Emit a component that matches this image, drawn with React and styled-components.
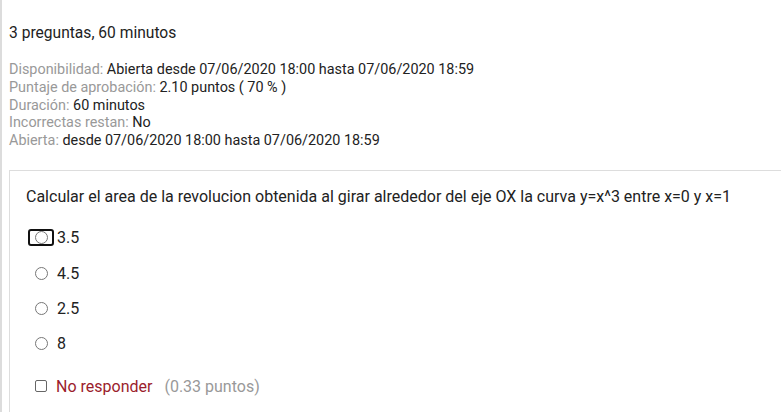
import React from "react";
import styled, { createGlobalStyle } from "styled-components";

const Global = createGlobalStyle`
  html, body { margin: 0; padding: 0; background: #fff; }
  body { font-family: Roboto, "Liberation Sans", Arial, sans-serif; color: #222; }
`;

const info = [
  ["Disponibilidad", "Abierta desde 07/06/2020 18:00 hasta 07/06/2020 18:59"],
  ["Puntaje de aprobación", "2.10 puntos ( 70 % )"],
  ["Duración", "60 minutos"],
  ["Incorrectas restan", "No"],
  ["Abierta", "desde 07/06/2020 18:00 hasta 07/06/2020 18:59"],
];

const options = ["3.5", "4.5", "2.5", "8"];

export default function App() {
  return (
    <>
      <Global />
      <Page>
        <Title>3 preguntas, 60 minutos</Title>
        <InfoList>
          {info.map(([k, v]) => (
            <InfoRow key={k}>
              <Label>{k}:</Label> {v}
            </InfoRow>
          ))}
        </InfoList>
        <Card>
          <Question>
            Calcular el area de la revolucion obtenida al girar alrededor del eje OX la curva y=x^3 entre x=0 y x=1
          </Question>
          <Options>
            {options.map((o, i) => (
              <Option key={o}>
                <RadioWrap $focused={i === 0}>
                  <Radio />
                </RadioWrap>
                <span>{o}</span>
              </Option>
            ))}
          </Options>
          <Skip>
            <Check />
            <SkipText>No responder</SkipText>
            <Points>(0.33 puntos)</Points>
          </Skip>
        </Card>
      </Page>
    </>
  );
}

const Page = styled.div`
  min-height: 412px;
  box-sizing: border-box;
  border-left: 2px solid #dcdcdc;
  padding: 24px 0 0 7px;
`;

const Title = styled.div`
  font-size: 15.6px;
  line-height: 18px;
  color: #222;
`;

const InfoList = styled.div`
  margin-top: 19px;
  font-size: 14.4px;
  line-height: 17.8px;
  color: #222;
`;

const InfoRow = styled.div`
  white-space: nowrap;
`;

const Label = styled.span`
  color: #999;
`;

const Card = styled.div`
  margin-top: 20px;
  border-top: 1px solid #ddd;
  border-left: 1px solid #ddd;
  padding: 17px 0 0 16px;
  min-height: 240px;
`;

const Question = styled.div`
  font-size: 16px;
  line-height: 18px;
  color: #222;
  white-space: nowrap;
`;

const Options = styled.div`
  margin-top: 23px;
  display: flex;
  flex-direction: column;
  gap: 17.3px;
`;

const Option = styled.div`
  display: flex;
  align-items: center;
  height: 18px;
  font-size: 16px;
  color: #222;
`;

const RadioWrap = styled.span`
  display: flex;
  align-items: center;
  justify-content: center;
  width: 22px;
  height: 13px;
  margin-left: 2px;
  margin-right: 3px;
  border: 2px solid ${(p) => (p.$focused ? "#111" : "transparent")};
  border-radius: 3px;
`;

const Radio = styled.span`
  width: 11px;
  height: 11px;
  border: 1px solid #777;
  border-radius: 50%;
  background: #fff;
`;

const Skip = styled.div`
  margin-top: 24px;
  display: flex;
  align-items: center;
  font-size: 16px;
`;

const Check = styled.span`
  width: 10px;
  height: 10px;
  border: 1px solid #666;
  border-radius: 2px;
  margin-left: 9px;
  margin-right: 9px;
`;

const SkipText = styled.span`
  color: #9b1c2c;
`;

const Points = styled.span`
  color: #999;
  margin-left: 12px;
`;
